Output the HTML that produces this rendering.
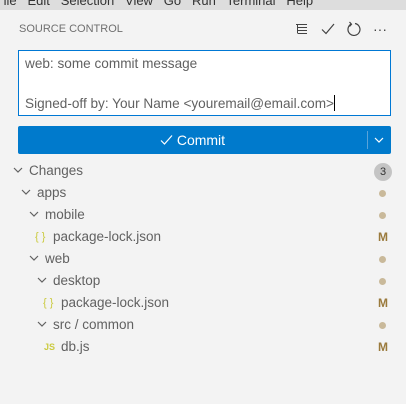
<!DOCTYPE html><html><head><style>
body{margin:0;width:406px;height:404px;background:#f3f3f3;font-family:"Liberation Sans",sans-serif;color:#616161;overflow:hidden;position:relative}
.menu{position:absolute;left:0;top:-9px;width:406px;height:19px;background:#dddddd;font-size:13px;color:#333;white-space:nowrap;line-height:19px}
.title{position:absolute;left:19px;top:23px;font-size:11px;color:#6f6f6f}
.box{position:absolute;left:18px;top:50px;width:371px;height:64px;background:#fff;border:1px solid #0078d4;font-size:13.6px;color:#616161}
.btn{position:absolute;left:18px;top:126px;width:373px;height:28px;background:#007acc;border-radius:2px;color:#fff;font-size:14px;line-height:28px}
.row{position:absolute;left:0;width:406px;height:22px;line-height:22px;font-size:13.5px;color:#616161}
.row svg{position:absolute;top:7px}
.dot{position:absolute;left:379px;top:8px;width:7px;height:7px;border-radius:50%;background:#c9b99a}
.m{position:absolute;left:378px;top:0;font-size:12px;font-weight:bold;color:#9a7a3c}
.j{color:#cbcb41;font-size:11px;position:absolute}
</style></head><body>
<div class="menu">&nbsp;ile &nbsp; Edit &nbsp; Selection &nbsp; View &nbsp; Go &nbsp; Run &nbsp; Terminal &nbsp; Help</div>
<div class="title">SOURCE CONTROL</div>
<svg style="position:absolute;left:296px;top:23px" width="12" height="12" viewBox="0 0 12 12" fill="none" stroke="#424242" stroke-width="1"><path d="M0 1.5H11M2 4.5H11M2 7.5H11M2 10.5H11M1.5 1.5V10.5"/></svg>
<svg style="position:absolute;left:321px;top:22px" width="14" height="14" viewBox="0 0 14 14" fill="none" stroke="#424242" stroke-width="1.2"><path d="M1 7.5L5 11.5L13 2"/></svg>
<svg style="position:absolute;left:347px;top:21px" width="14" height="15" viewBox="0 0 14 15" fill="none" stroke="#424242" stroke-width="1.2"><path d="M4 3.2A6 6 0 1 0 8 2.5"/><path d="M2.5 1L4.5 3.3L2.5 5.5"/></svg>
<div style="position:absolute;left:373px;top:21px;font-size:14px;color:#424242">···</div>
<div class="box"><div style="position:absolute;left:6px;top:5px">web: some commit message</div><div style="position:absolute;left:6px;top:44px">Signed-off by: Your Name &lt;youremail@email.com&gt;<span style="display:inline-block;width:1px;height:16px;background:#000;vertical-align:-3px"></span></div></div>
<div class="btn"><div style="position:absolute;left:0;width:349px;text-align:center"><svg width="13" height="12" viewBox="0 0 13 12" fill="none" stroke="#fff" stroke-width="1.2" style="vertical-align:-1px"><path d="M1 6.5L4.5 10L12 1.5"/></svg> Commit</div><div style="position:absolute;left:349px;top:5px;width:1px;height:18px;background:#5aa3d9"></div><svg style="position:absolute;left:356px;top:11px" width="10" height="6" viewBox="0 0 10 6" fill="none" stroke="#fff" stroke-width="1.2"><path d="M1 1L5 5L9 1"/></svg></div>
<div class="row" style="top:160px"><svg style="left:13px" width="10" height="7" viewBox="0 0 10 7" fill="none" stroke="#616161" stroke-width="1.2"><path d="M1 1L5 5L9 1"/></svg><span style="position:absolute;left:29px">Changes</span><span style="position:absolute;left:374px;top:3px;width:18px;height:18px;border-radius:9px;background:#c4c4c4;color:#333;font-size:11px;line-height:18px;text-align:center">3</span></div>
<div class="row" style="top:182px"><svg style="left:21px" width="10" height="7" viewBox="0 0 10 7" fill="none" stroke="#616161" stroke-width="1.2"><path d="M1 1L5 5L9 1"/></svg><span style="position:absolute;left:37px">apps</span><span class="dot"></span></div>
<div class="row" style="top:204px"><svg style="left:29px" width="10" height="7" viewBox="0 0 10 7" fill="none" stroke="#616161" stroke-width="1.2"><path d="M1 1L5 5L9 1"/></svg><span style="position:absolute;left:45px">mobile</span><span class="dot"></span></div>
<div class="row" style="top:226px"><span class="j" style="left:35px">{ }</span><span style="position:absolute;left:53px">package-lock.json</span><span class="m">M</span></div>
<div class="row" style="top:248px"><svg style="left:29px" width="10" height="7" viewBox="0 0 10 7" fill="none" stroke="#616161" stroke-width="1.2"><path d="M1 1L5 5L9 1"/></svg><span style="position:absolute;left:45px">web</span><span class="dot"></span></div>
<div class="row" style="top:270px"><svg style="left:37px" width="10" height="7" viewBox="0 0 10 7" fill="none" stroke="#616161" stroke-width="1.2"><path d="M1 1L5 5L9 1"/></svg><span style="position:absolute;left:53px">desktop</span><span class="dot"></span></div>
<div class="row" style="top:292px"><span class="j" style="left:43px">{ }</span><span style="position:absolute;left:61px">package-lock.json</span><span class="m">M</span></div>
<div class="row" style="top:314px"><svg style="left:37px" width="10" height="7" viewBox="0 0 10 7" fill="none" stroke="#616161" stroke-width="1.2"><path d="M1 1L5 5L9 1"/></svg><span style="position:absolute;left:53px">src / common</span><span class="dot"></span></div>
<div class="row" style="top:336px"><span class="j" style="left:44px;font-weight:bold;font-size:9px">JS</span><span style="position:absolute;left:61px">db.js</span><span class="m">M</span></div>
</body></html>
